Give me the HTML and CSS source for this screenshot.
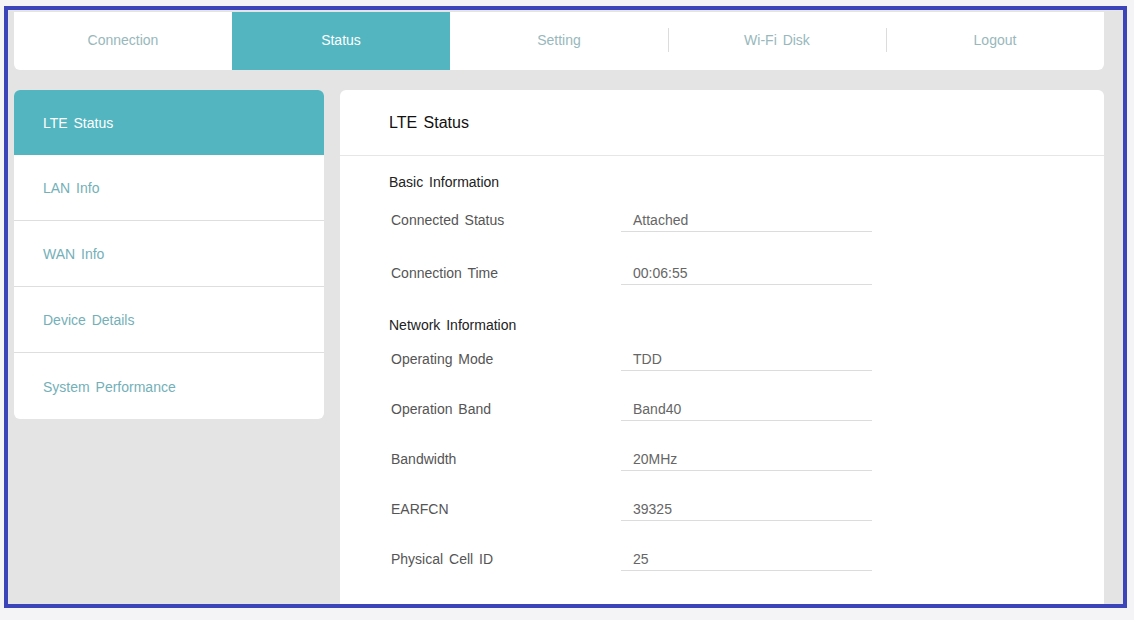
FILE: index.html
```
<!DOCTYPE html>
<html>
	<head>
		<title>LTE Status</title>
		<meta charset="utf-8">
		<link rel="stylesheet" href="styles.css">
	</head>
	<body>
		<div class="page">
			<div class="nav">
				<a class="tab">Connection</a>
				<a class="tab active">Status</a>
				<a class="tab">Setting</a>
				<a class="tab divided">Wi-Fi Disk</a>
				<a class="tab divided">Logout</a>
			</div>
			<div class="content">
				<ul class="side-menu">
					<li class="active">LTE Status</li>
					<li>LAN Info</li>
					<li>WAN Info</li>
					<li>Device Details</li>
					<li>System Performance</li>
				</ul>
				<div class="panel">
					<div class="panel-title">LTE Status</div>
					<div class="section basic">
						<div class="section-title">Basic Information</div>
						<div class="rows">
							<div class="row"><span class="label">Connected Status</span><span class="value">Attached</span></div>
							<div class="row"><span class="label">Connection Time</span><span class="value">00:06:55</span></div>
						</div>
					</div>
					<div class="section network">
						<div class="section-title">Network Information</div>
						<div class="rows">
							<div class="row"><span class="label">Operating Mode</span><span class="value">TDD</span></div>
							<div class="row"><span class="label">Operation Band</span><span class="value">Band40</span></div>
							<div class="row"><span class="label">Bandwidth</span><span class="value">20MHz</span></div>
							<div class="row"><span class="label">EARFCN</span><span class="value">39325</span></div>
							<div class="row"><span class="label">Physical Cell ID</span><span class="value">25</span></div>
							<div class="row"><span class="label">PLMN</span><span class="value">46001</span></div>
						</div>
					</div>
				</div>
			</div>
		</div>
		<div class="frame"></div>
	</body>
</html>
```

FILE: styles.css
```
html, body {padding: 0px; margin: 0px; height: 100%; overflow: hidden;}
body {background-color: #e4e4e4; font-family: "Liberation Sans", Arial, sans-serif; font-size: 14px; word-spacing: 2px;}

/* the blue outline around the screenshot */
.frame {position: fixed; left: 4px; top: 6px; width: 1123px; height: 602px; box-sizing: border-box; border: 4px solid #3b44b8; box-shadow: 0 0 0 40px #f4f4f6; pointer-events: none;}

.page {padding: 12px 0 0 14px; width: 1090px;}

.nav {display: flex; height: 58px; background-color: #fff; border-radius: 0 0 6px 6px; overflow: hidden;}
.tab {position: relative; flex: 1; display: flex; align-items: center; justify-content: center; padding-bottom: 2px; color: #98b8bc; cursor: pointer;}
.tab.active {background-color: #52b5bf; color: #fff;}
.tab.divided::before {content: ""; position: absolute; left: 0; top: 16px; bottom: 18px; width: 1px; background-color: #dcdcdc;}

.content {display: flex; align-items: flex-start; gap: 16px; margin-top: 20px;}

.side-menu {list-style: none; margin: 0; padding: 0; width: 310px; background-color: #fff; border-radius: 6px; overflow: hidden;}
.side-menu li {height: 65px; display: flex; align-items: center; padding-left: 29px; padding-top: 1px; box-sizing: border-box; height: 66px; color: #74b0b8; border-bottom: 1px solid #dedede;}
.side-menu li:last-child {border-bottom: none;}
.side-menu li.active {height: 65px; background-color: #52b5bf; color: #fff; border-bottom: none;}

.panel {flex: 1; background-color: #fff; border-radius: 6px 6px 0 0; height: 560px;}
.panel-title {height: 65px; display: flex; align-items: center; padding-left: 49px; font-size: 16px; color: #111; border-bottom: 1px solid #e6e6e6;}

.section {padding-left: 49px;}
.section-title {line-height: 20px; color: #222;}
.basic {padding-top: 16px;}
.basic .section-title {margin-bottom: 17px;}
.network {padding-top: 30px;}
.network .section-title {margin-bottom: 13px;}

.rows {display: flex; flex-direction: column; gap: 27px;}
.basic .rows {gap: 30px;}
.row {display: flex; align-items: flex-start;}
.label {width: 230px; padding-left: 2px; line-height: 22px; color: #555;}
.value {width: 239px; padding-left: 12px; line-height: 22px; color: #666; border-bottom: 1px solid #dcdcdc;}
```
